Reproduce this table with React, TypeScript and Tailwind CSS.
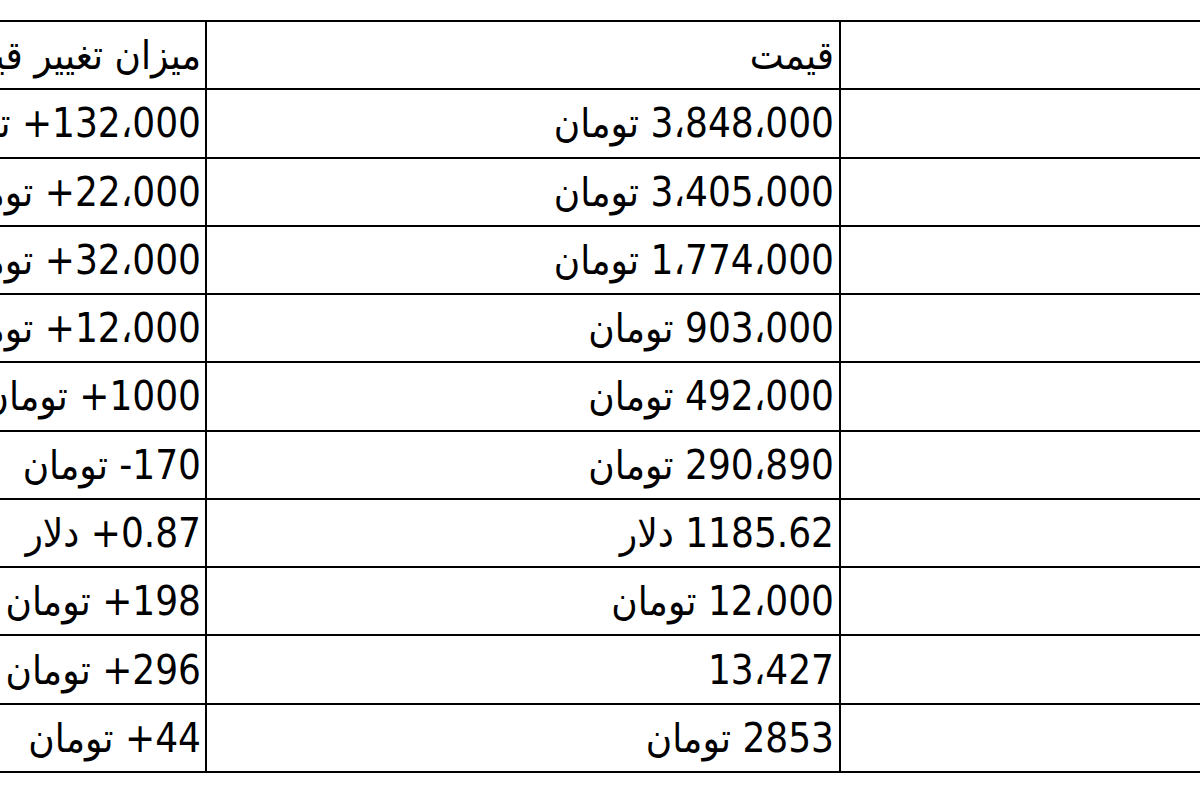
const HEADER = ["", "قیمت", "میزان تغییر قیمت"];

const ROWS: [string, string][] = [
  ["3،848،000 تومان", "132،000+ تومان"],
  ["3،405،000 تومان", "22،000+ تومان"],
  ["1،774،000 تومان", "32،000+ تومان"],
  ["903،000 تومان", "12،000+ تومان"],
  ["492،000 تومان", "1000+ تومان"],
  ["290،890 تومان", "170- تومان"],
  ["1185.62 دلار", "0.87+ دلار"],
  ["12،000 تومان", "198+ تومان"],
  ["13،427", "296+ تومان"],
  ["2853 تومان", "44+ تومان"],
];

function Row({ cells }: { cells: string[] }) {
  return (
    <div className="flex h-[68.27px] border-b-2 border-black">
      <div className="w-[381px] shrink-0 border-l-2 border-black">{cells[0]}</div>
      <div className="flex w-[634px] shrink-0 items-center whitespace-nowrap border-l-2 border-black pr-[5px]">
        {cells[1]}
      </div>
      <div className="flex w-[305px] shrink-0 items-center whitespace-nowrap pr-[4px]">{cells[2]}</div>
    </div>
  );
}

export default function App() {
  return (
    <div
      dir="rtl"
      className="h-[800px] w-[1200px] overflow-hidden bg-white pt-[20px] text-[40px] leading-none text-black font-[family-name:'DejaVu_Sans_Condensed','DejaVu_Sans',sans-serif]"
    >
      <div className="mr-[-20px] w-[1320px] border-t-2 border-black">
        <Row cells={HEADER} />
        {ROWS.map((r, i) => (
          <Row key={i} cells={["", r[0], r[1]]} />
        ))}
      </div>
    </div>
  );
}
